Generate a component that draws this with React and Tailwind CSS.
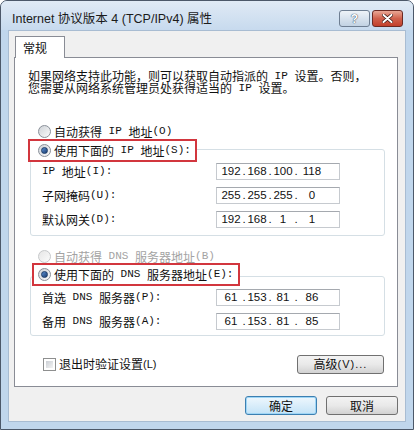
import React from 'react';

// SimSun-like run: ASCII in half-width mono, CJK in Noto
const Sim = ({ text }) =>
  text.split(/([\x20-\x7e]+)/).filter(Boolean).map((part, i) =>
    /^[\x20-\x7e]+$/.test(part) ? (
      <span key={i} className="font-['Liberation_Mono',monospace] text-[11px] whitespace-pre">{part}</span>
    ) : (
      <span key={i}>{part}</span>
    )
  );

const Radio = ({ checked, disabled }) => (
  <span
    className={
      'flex w-[13px] h-[13px] shrink-0 items-center justify-center rounded-full border ' +
      (disabled
        ? 'border-[#c6c8ca] bg-gradient-to-br from-[#e6e6e6] to-[#fbfbfb]'
        : 'border-[#8a9099] bg-gradient-to-br from-[#cfd3d8] to-[#fafafa]')
    }
  >
    {checked && <span className="w-[7px] h-[7px] rounded-full border border-[#1b3a66] bg-gradient-to-br from-[#5c8fd0] to-[#1c3f74]" />}
  </span>
);

const IpField = ({ ip }) => (
  <div className="flex w-[124px] h-[17px] items-center border border-[#c6cacf] border-t-[#a5a9af] bg-white pl-[3px] font-['Liberation_Sans',sans-serif] text-[11.5px] text-[#111]">
    {ip.map((o, i) => (
      <React.Fragment key={i}>
        {i > 0 && <span className="w-[4px] text-center">.</span>}
        <span className={i === 3 ? 'w-[28px] text-center' : 'w-[22px] text-center'}>{o}</span>
      </React.Fragment>
    ))}
  </div>
);

const FieldRow = ({ label, ip }) => (
  <div className="flex items-center h-[17px]">
    <div className="w-[185px] pl-[11px] flex items-center"><Sim text={label} /></div>
    <IpField ip={ip} />
  </div>
);

const ipRows = [
  { label: 'IP 地址(I):', ip: ['192', '168', '100', '118'] },
  { label: '子网掩码(U):', ip: ['255', '255', '255', '0'] },
  { label: '默认网关(D):', ip: ['192', '168', '1', '1'] },
];

const dnsRows = [
  { label: '首选 DNS 服务器(P):', ip: ['61', '153', '81', '86'] },
  { label: '备用 DNS 服务器(A):', ip: ['61', '153', '81', '85'] },
];

const btn =
  'flex items-center justify-center h-[19px] rounded-[3px] border text-[12px] text-[#111]';

export default function App() {
  return (
    <div className="w-[414px] h-[430px] flex flex-col bg-[#c0d6ec] border border-[#4c5869] rounded-t-[7px] overflow-hidden font-['Noto_Sans_CJK_SC',sans-serif] text-[12px] leading-none text-[#111]">
      {/* title bar */}
      <div className="h-[29px] shrink-0 flex items-start bg-gradient-to-b from-[#e0eaf5] to-[#c7daee] pl-[11px] pr-[10px]">
        <div className="mt-[12px] font-['Liberation_Sans','Noto_Sans_CJK_SC',sans-serif] text-[12.5px] text-[#1b1b1b]">
          Internet 协议版本 4 (TCP/IPv4) 属性
        </div>
        <div className="ml-auto mt-[9px] flex gap-[2px]">
          <div className="w-[31px] h-[17px] flex items-center justify-center rounded-[3px] border border-[#6e7e92] bg-gradient-to-b from-[#eef3f8] to-[#c2d2e3] font-['Liberation_Sans',sans-serif] font-bold text-[12px] text-white [text-shadow:0_0_1px_#2f4259,0_0_1px_#2f4259]">
            ?
          </div>
          <div className="w-[31px] h-[17px] flex items-center justify-center rounded-[3px] border border-[#6b2a24] bg-gradient-to-b from-[#e9a796] via-[#d0614d] to-[#c23f2b]">
            <svg width="11" height="9" viewBox="0 0 11 9">
              <path d="M1.5 1 L9.5 8 M9.5 1 L1.5 8" stroke="#3a1410" strokeWidth="3.4" strokeLinecap="round" />
              <path d="M1.5 1 L9.5 8 M9.5 1 L1.5 8" stroke="#fff" strokeWidth="2" strokeLinecap="round" />
            </svg>
          </div>
        </div>
      </div>

      {/* client area */}
      <div className="flex-1 mx-[7px] mb-[7px] flex flex-col bg-[#f0f0f0] border border-[#a8bcd2]">
        <div className="pt-[5px] pl-[5px]">
          <div className="relative z-10 -mb-px ml-px w-[50px] h-[22px] flex items-center pl-[7px] bg-white border border-b-0 border-[#898c95]">
            常规
          </div>
          <div className="w-[384px] h-[330px] flex flex-col bg-white border border-[#898c95]">
            <div className="mt-[12px] pl-[13px]">
              <div className="h-[12px] flex items-center"><Sim text="如果网络支持此功能，则可以获取自动指派的 IP 设置。否则，" /></div>
              <div className="h-[12px] flex items-center"><Sim text="您需要从网络系统管理员处获得适当的 IP 设置。" /></div>
            </div>

            <div className="mt-[30px] ml-[23px] h-[15px] flex items-center gap-[3px]">
              <Radio />
              <span className="flex items-center"><Sim text="自动获得 IP 地址(O)" /></span>
            </div>
            <div className="relative z-10 ml-[13px] w-[169px] h-[23px] flex items-center gap-[3px] pl-[8px] border-2 border-[#d2363e] bg-white">
              <Radio checked />
              <span className="flex items-center"><Sim text="使用下面的 IP 地址(S):" /></span>
            </div>
            <div className="-mt-[13px] ml-[15px] w-[355px] flex flex-col gap-[7px] pt-[13px] pb-[7px] border border-[#d5dfe5] rounded-[3px]">
              {ipRows.map((r) => <FieldRow key={r.label} {...r} />)}
            </div>

            <div className="mt-[13px] ml-[23px] h-[15px] flex items-center gap-[3px] text-[#a3a3a3]">
              <Radio disabled />
              <span className="flex items-center"><Sim text="自动获得 DNS 服务器地址(B)" /></span>
            </div>
            <div className="relative z-10 -mt-px ml-[17px] w-[208px] h-[23px] flex items-center gap-[3px] pl-[4px] border-2 border-[#d2363e] bg-white">
              <Radio checked />
              <span className="flex items-center"><Sim text="使用下面的 DNS 服务器地址(E):" /></span>
            </div>
            <div className="-mt-[10px] ml-[15px] w-[355px] flex flex-col gap-[7px] pt-[12px] pb-[5px] border border-[#d5dfe5] rounded-[3px]">
              {dnsRows.map((r) => <FieldRow key={r.label} {...r} />)}
            </div>

            <div className="mt-[19px] ml-[28px] mr-[13px] h-[18px] flex items-center">
              <span className="w-[13px] h-[13px] p-[2px] border border-[#8e8f8f] bg-white">
                <span className="block w-full h-full bg-gradient-to-br from-[#cbcfd5] to-[#f4f4f4]" />
              </span>
              <span className="ml-[3px] flex items-center">退出时验证设置<span className="font-['Liberation_Sans',sans-serif] text-[11px]">(L)</span></span>
              <div className={btn + ' ml-auto w-[87px] h-[18px] border-[#707070] bg-gradient-to-b from-[#f3f3f3] via-[#e9e9e9] to-[#d2d2d2]'}>
                高级<span className="font-['Liberation_Sans',sans-serif] text-[11px] tracking-[1px]">(V)...</span>
              </div>
            </div>
          </div>
        </div>

        {/* dialog buttons */}
        <div className="mt-[9px] pr-[7px] flex justify-end gap-[9px]">
          <div className={btn + ' w-[72px] border-[#3c7fb1] bg-gradient-to-b from-[#eef7fd] to-[#c4e3f7] shadow-[inset_0_0_0_1px_#9fd6f6]'}>
            确定
          </div>
          <div className={btn + ' w-[72px] border-[#707070] bg-gradient-to-b from-[#f3f3f3] via-[#e9e9e9] to-[#d2d2d2]'}>
            取消
          </div>
        </div>
      </div>
    </div>
  );
}
